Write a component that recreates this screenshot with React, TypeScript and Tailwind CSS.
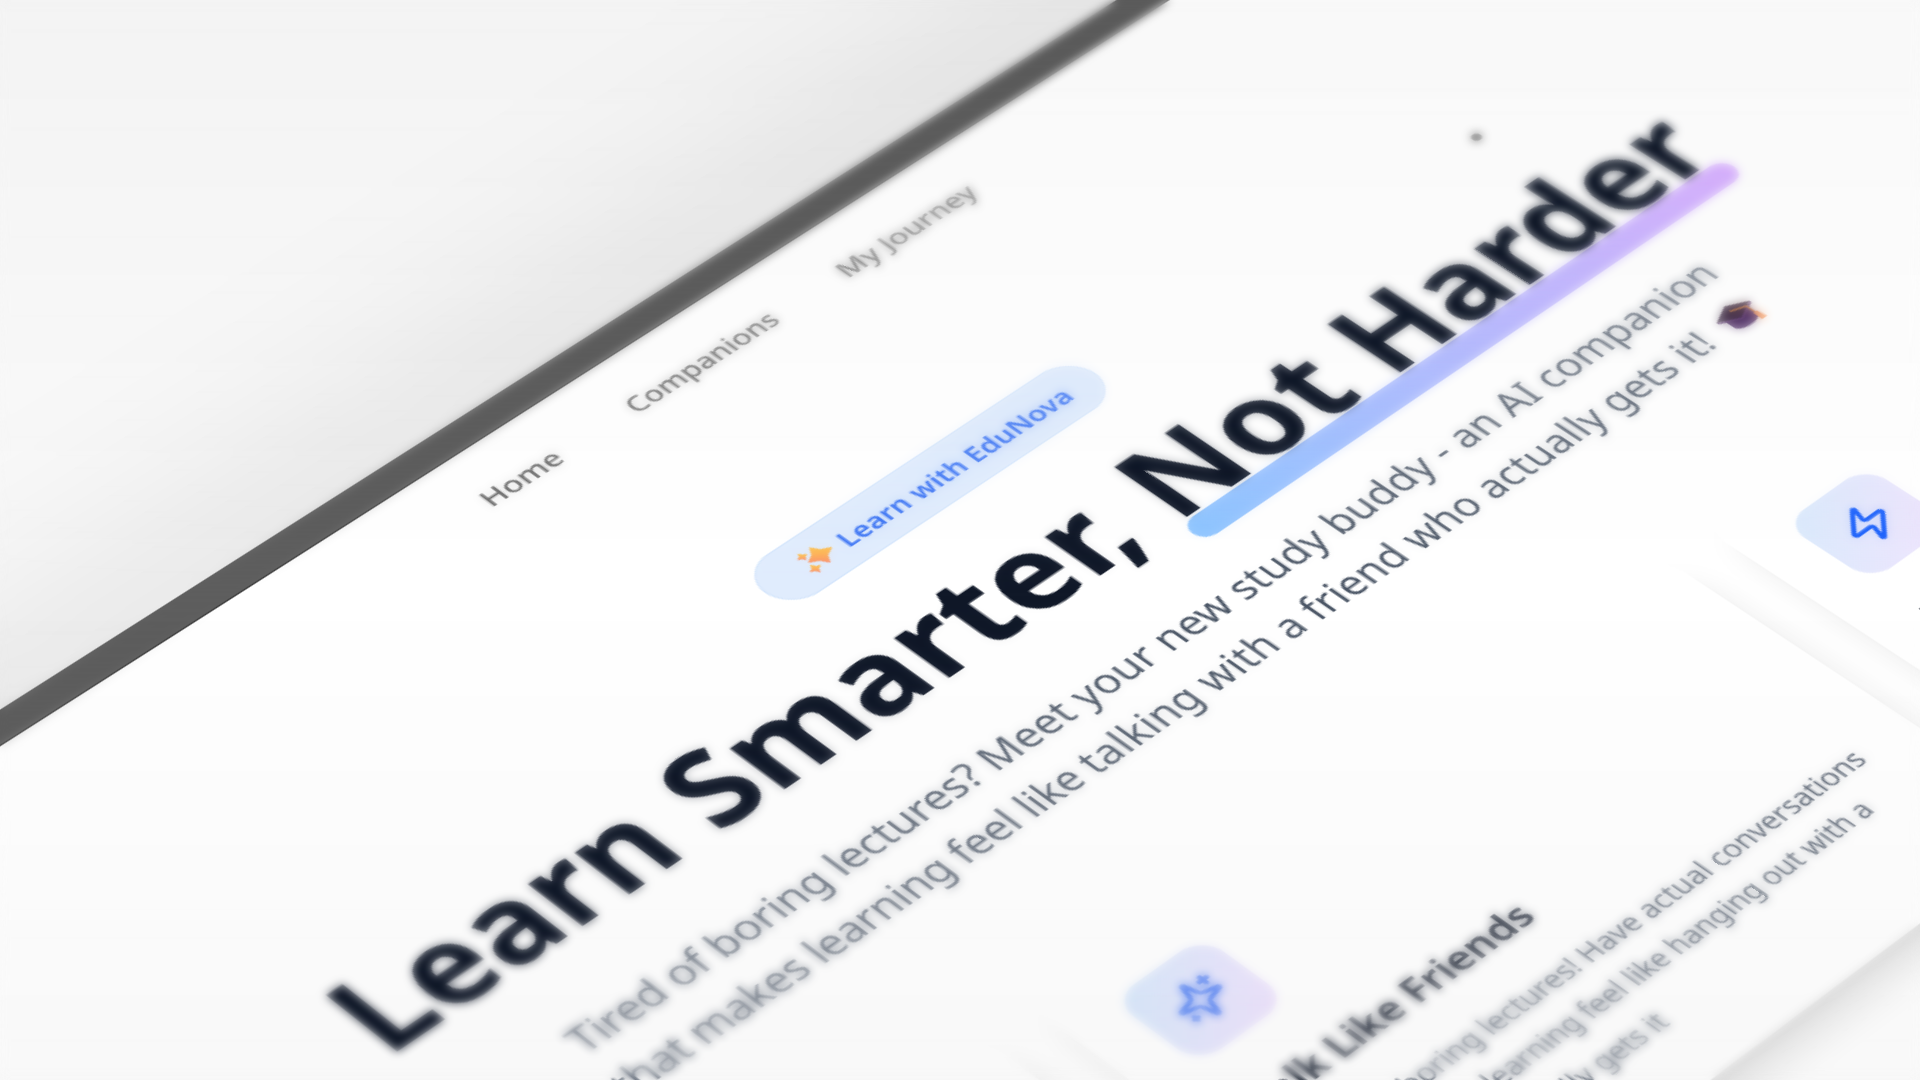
import type { ReactNode } from "react";
import { Zap } from "lucide-react";

function Fit({ box, scale, children }: { box: string; scale: string; children: ReactNode }) {
  return (
    <span className={`block shrink-0 whitespace-nowrap ${box}`}>
      <span className={`inline-block origin-left ${scale}`}>{children}</span>
    </span>
  );
}

function SparklesIcon() {
  return (
    <svg viewBox="0 0 24 24" className="size-8 text-[#3f74f3]" fill="none" stroke="currentColor" strokeWidth="2" strokeLinecap="round" strokeLinejoin="round">
      <path d="M9.937 15.5A2 2 0 0 0 8.5 14.063l-6.135-1.582a.5.5 0 0 1 0-.962L8.5 9.936A2 2 0 0 0 9.937 8.5l1.582-6.135a.5.5 0 0 1 .963 0L14.063 8.5A2 2 0 0 0 15.5 9.937l6.135 1.581a.5.5 0 0 1 0 .964L15.5 14.063a2 2 0 0 0-1.437 1.437l-1.582 6.135a.5.5 0 0 1-.963 0z" />
      <path d="M20 3v4M22 5h-4M4 17v2M5 18H3" />
    </svg>
  );
}

function StarsEmoji() {
  return (
    <svg viewBox="0 0 24 24" className="ml-[2px] size-[23px]">
      <defs>
        <linearGradient id="star" x1="0.9" y1="0.1" x2="0.2" y2="0.9">
          <stop offset="0" stopColor="#fdc94a" />
          <stop offset="0.5" stopColor="#fdb257" />
          <stop offset="1" stopColor="#fb8a70" />
        </linearGradient>
      </defs>
      <g fill="url(#star)" stroke="url(#star)" strokeWidth="1" strokeLinejoin="round">
        <path d="M14 3l3 5.200 5.400 3-5.400 3L14 19.400l-3-5.200-5-3 5-3z" />
        <path d="M6 2.4l.9 2 2 .9-2 .9-.9 2-.9-2-2-.9 2-.9z" />
        <path d="M4.8 14l1.1 2.5 2.4 1.1-2.4 1.1-1.1 2.4-1.1-2.4-2.4-1.1 2.4-1.1z" />
      </g>
    </svg>
  );
}

function CapEmoji() {
  return (
    <svg viewBox="0 0 28 28" className="-mt-[2px] size-7">
      <path d="M5 12v8c0 2.600 4 4.500 9 4.500s9-1.900 9-4.500v-8z" fill="#5b3b70" />
      <path d="M1 10.500L14 4l13 6.500L14 17z" fill="#45334a" />
      <path d="M1 10.500L14 17l13-6.500v1.400L14 18.500 1 11.900z" fill="#6d4a80" />
      <path d="M13 9l9.500 3.200V20" fill="none" stroke="#d98a4a" strokeWidth="1.500" />
      <path d="M21.300 19h2.800l.6 7h-4z" fill="#fb9a5b" />
    </svg>
  );
}

function Card({ icon, title, children }: { icon: ReactNode; title?: string; children?: ReactNode }) {
  return (
    <div className="h-[289px] rounded-3xl bg-white p-8 pt-[35px] shadow-[0_20px_25px_-5px_rgba(0,0,0,0.11),0_8px_10px_-6px_rgba(0,0,0,0.06)]">
      <div className="flex size-16 items-center justify-center rounded-2xl bg-linear-to-br from-[#d9eafc] to-[#f0e4fd]">{icon}</div>
      {title && <h3 className="mt-6 text-2xl leading-8 font-semibold whitespace-nowrap text-gray-900">{title}</h3>}
      {children && <div className="mt-[13px] text-[18px] leading-[30px] text-gray-600">{children}</div>}
    </div>
  );
}

export default function App() {
  return (
    <div className="relative h-[1080px] w-[1920px] overflow-hidden bg-[#fafafa] font-['Noto_Sans',sans-serif]">
      <div className="absolute top-0 left-0 h-[1200px] w-[1920px] origin-top-left [transform:matrix3d(1.45859,-0.85685,0,0.000099,1.1542,0.827304,0,-0.000116927,0,0,1,0,960.7,539.6,0,1)_translate(-939.6px,-247px)]">
        <div className="-mt-[21px] h-[22px] border-b border-[#3a3a3a] bg-[#5e5e5e] shadow-[0_0_150px_rgba(0,0,0,0.5)]" />
        <div className="relative h-[1200px] bg-white">
          <nav className="flex pt-[27px] pl-[779px] text-[18px] leading-6 font-medium text-[#5c5c5c]">
            <Fit box="w-[105.2px]" scale="scale-x-[1.03]">Home</Fit>
            <Fit box="w-[155.5px]" scale="scale-x-[0.985]">Companions</Fit>
            <Fit box="w-[100px]" scale="scale-x-[1.035]">My Journey</Fit>
          </nav>
          <div className="mt-[129.4px] flex justify-center">
            <div className="flex h-[42px] w-[243.5px] items-center rounded-full border border-[#d3e5fc] bg-[#e0ecfd] pl-6 text-[17px] font-semibold text-[#3670f4]">
              <StarsEmoji />
              <span className="w-[4.5px]" />
              <Fit box="w-[170px]" scale="scale-x-[1.006]">Learn with EduNova</Fit>
            </div>
          </div>
          <h1 className="mt-[27.5px] flex pl-[473.7px] text-[79px] leading-[80px] font-bold text-gray-900">
            <Fit box="w-[225.5px]" scale="scale-x-[0.909]">Learn</Fit>
            <Fit box="w-[330.8px]" scale="scale-x-[0.942]">Smarter,</Fit>
            <span className="relative flex w-[420px]">
              <Fit box="w-[162.4px]" scale="scale-x-[0.964]">Not</Fit>
              <Fit box="w-[257px]" scale="scale-x-[0.946]">Harder</Fit>
              <i className="absolute top-[72.4px] left-0 h-[19px] w-full rounded-full bg-linear-to-r from-blue-300 to-purple-300" />
            </span>
          </h1>
          <div className="mt-[31.6px] text-[26px] leading-[39px] text-gray-600">
            <div className="flex pl-[545.9px]">
              <Fit box="w-[832px]" scale="scale-x-[0.9536]">
                <span className="tracking-[-0.14px]">Tired of boring lectures? </span>
                <span className="tracking-[0.1px]">Meet your new study buddy - an AI companion</span>
              </Fit>
            </div>
            <div className="flex items-center pl-[541px]">
              <Fit box="w-[806px]" scale="scale-x-[0.939]">
                <span className="tracking-[-0.16px]">that makes learning feel like </span>
                <span className="tracking-[0.16px]">talking with a friend who actually gets it!</span>
              </Fit>
              <CapEmoji />
            </div>
          </div>
          <div className="mx-auto mt-[77.4px] grid w-[1456px] grid-cols-3 gap-8">
            <Card icon={<Zap className="size-8 text-blue-600" />} />
            <Card icon={<SparklesIcon />} title="Talk Like Friends">
              <Fit box="w-[400px] -ml-[7px]" scale="scale-x-[0.934]">Skip the boring lectures! Have actual conversations</Fit>
              <Fit box="w-[400px] ml-[3px] -mt-[1.5px]" scale="scale-x-[0.918]">and makes learning feel like hanging out with a</Fit>
              <Fit box="w-[400px] ml-[4.5px]" scale="scale-x-[0.918]">friend who really gets it</Fit>
            </Card>
            <Card icon={<Zap className="size-8 text-blue-600" />} title="Learn Your Way" />
          </div>
          <i className="absolute top-[207.5px] left-[1364.5px] size-[6.5px] rounded-full bg-[#444]" />
        </div>
      </div>
      <div className="pointer-events-none absolute inset-0 bg-linear-to-b from-black/[0.026] via-transparent via-54% to-black/[0.026]" />
      <div className="pointer-events-none absolute inset-0 backdrop-blur-[5px] [mask-image:linear-gradient(to_bottom,rgba(0,0,0,0.95),rgba(0,0,0,0.72)_21%,rgba(0,0,0,0.3)_42%,rgba(0,0,0,0)_55%,rgba(0,0,0,0.08)_61%,rgba(0,0,0,0.42)_77%,rgba(0,0,0,0.82)_93%,rgba(0,0,0,0.9))]" />
    </div>
  );
}
